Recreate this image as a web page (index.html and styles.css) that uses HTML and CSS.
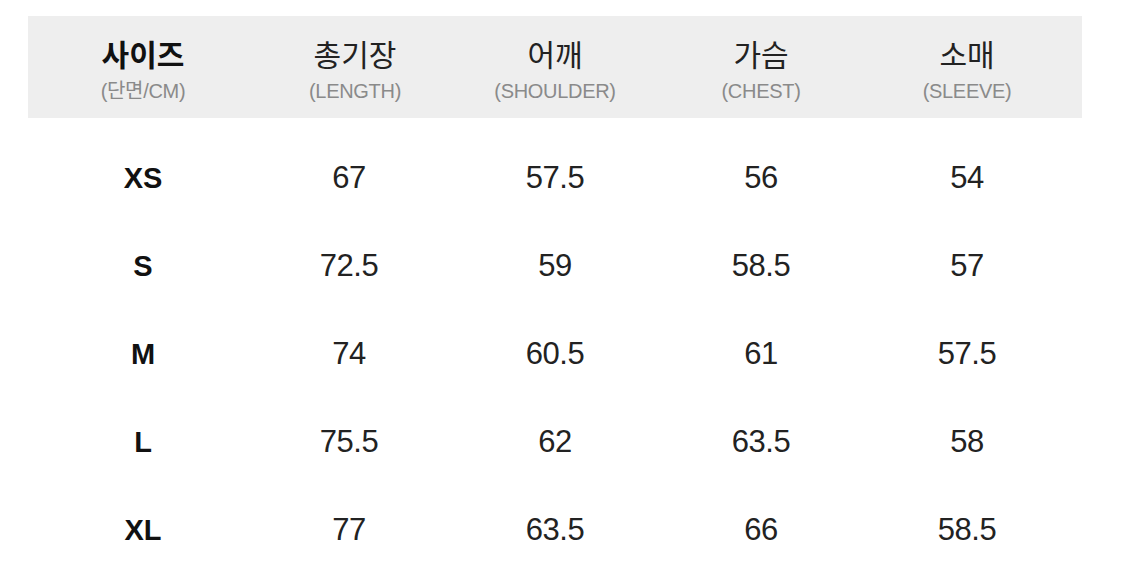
FILE: index.html
```html
<!DOCTYPE html>
<html lang="ko">
<head>
<meta charset="utf-8">
<title>사이즈</title>
<link rel="stylesheet" href="styles.css">
</head>
<body>
<div class="page">
  <div class="size-table">
    <div class="head">
      <div class="cell"><div class="title strong">사이즈</div><div class="sub">(단면/CM)</div></div>
      <div class="cell"><div class="title">총기장</div><div class="sub">(LENGTH)</div></div>
      <div class="cell"><div class="title">어깨</div><div class="sub">(SHOULDER)</div></div>
      <div class="cell"><div class="title">가슴</div><div class="sub">(CHEST)</div></div>
      <div class="cell"><div class="title">소매</div><div class="sub">(SLEEVE)</div></div>
    </div>
    <div class="row"><div class="size">XS</div><div class="val">67</div><div class="val">57.5</div><div class="val">56</div><div class="val">54</div></div>
    <div class="row"><div class="size">S</div><div class="val">72.5</div><div class="val">59</div><div class="val">58.5</div><div class="val">57</div></div>
    <div class="row"><div class="size">M</div><div class="val">74</div><div class="val">60.5</div><div class="val">61</div><div class="val">57.5</div></div>
    <div class="row"><div class="size">L</div><div class="val">75.5</div><div class="val">62</div><div class="val">63.5</div><div class="val">58</div></div>
    <div class="row"><div class="size">XL</div><div class="val">77</div><div class="val">63.5</div><div class="val">66</div><div class="val">58.5</div></div>
  </div>
</div>
</body>
</html>
```

FILE: styles.css
```css
html, body {
  margin: 0;
  padding: 0;
  background: #ffffff;
}

body {
  font-family: "Liberation Sans", "Noto Sans CJK KR", Arial, sans-serif;
  color: #222222;
}

.page {
  padding: 16px 43px 0 28px;
}

.size-table {
  width: 1054px;
}

.head {
  background: #eeeeee;
  height: 102px;
  padding: 0 12px;
  display: grid;
  grid-template-columns: repeat(5, 206px);
  align-items: center;
}

.cell {
  display: flex;
  flex-direction: column;
  align-items: center;
  padding-top: 3px;
}

.cell:nth-child(2) { padding-left: 12px; }

.title {
  font-family: "Noto Sans CJK KR", "Liberation Sans", sans-serif;
  font-size: 30px;
  line-height: 36px;
  font-weight: 400;
  color: #222222;
}

.title.strong {
  font-weight: 700;
  color: #111111;
}

.sub {
  font-family: "Liberation Sans", "Noto Sans CJK KR", sans-serif;
  font-size: 20px;
  line-height: 24px;
  color: #8a8a8a;
  letter-spacing: -0.3px;
  margin-top: 8px;
}

.row {
  display: grid;
  grid-template-columns: repeat(5, 206px);
  padding: 0 12px;
  height: 88px;
  align-items: center;
}

.head + .row { margin-top: 16px; }

.size {
  text-align: center;
  font-size: 29px;
  font-weight: 700;
  color: #111111;
}

.val {
  text-align: center;
  font-size: 31px;
  color: #222222;
  letter-spacing: -0.5px;
}
```
